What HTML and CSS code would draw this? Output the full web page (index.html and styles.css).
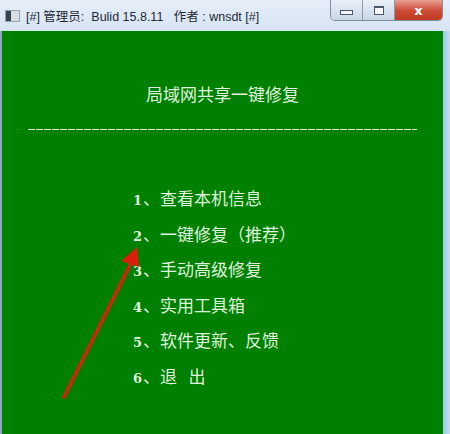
FILE: index.html
```html
<!DOCTYPE html>
<html lang="zh-CN">
<head>
    <meta charset="UTF-8">
    <title>局域网共享一键修复</title>
    <link rel="stylesheet" href="styles.css">
</head>
<body>
    <div class="window">
        <header class="titlebar">
            <div class="title">
                <span class="app-icon"><span class="app-icon-bar"></span></span>
                <span class="title-text">[#] 管理员:&nbsp; Bulid 15.8.11 &nbsp; 作者 : wnsdt [#]</span>
            </div>
            <div class="caption-buttons">
                <div class="cap cap-min"><span class="glyph-min"></span></div>
                <div class="cap cap-max"><span class="glyph-max"></span></div>
                <div class="cap cap-close">x</div>
            </div>
        </header>
        <div class="frame">
            <div class="console">
                <h1 class="heading">局域网共享一键修复</h1>
                <div class="rule"></div>
                <ul class="menu">
                    <li><b>1</b>、查看本机信息</li>
                    <li><b>2</b>、一键修复（推荐）</li>
                    <li><b>3</b>、手动高级修复</li>
                    <li><b>4</b>、实用工具箱</li>
                    <li><b>5</b>、软件更新、反馈</li>
                    <li><b>6</b>、退&nbsp;&nbsp;&nbsp;出</li>
                </ul>
                <svg class="arrow" width="100" height="170" viewBox="0 0 100 170">
                    <line x1="7" y1="150" x2="74" y2="16" stroke="#b8300c" stroke-width="4" stroke-linecap="round"/>
                    <polygon points="80,0 82,20 64,14" fill="#d8200c"/>
                </svg>
            </div>
            <div class="edge"></div>
        </div>
    </div>
</body>
</html>
```

FILE: styles.css
```css
body {
    margin: 0;
    padding: 0;
    background-color: #cfe0f1;
    font-family: "Noto Sans CJK SC", "Liberation Sans", sans-serif;
}
.window {
    width: 450px;
    height: 434px;
    display: flex;
    flex-direction: column;
    overflow: hidden;
}
.titlebar {
    height: 31px;
    display: flex;
    justify-content: space-between;
    background: linear-gradient(to bottom, #e6eef8, #d6e4f3);
}
.title {
    display: flex;
    align-items: center;
    padding: 0 0 0 5px;
    height: 31px;
    gap: 6px;
}
.app-icon {
    width: 15px;
    height: 12px;
    background-color: #d8dde4;
    border: 1px solid #9aa3ad;
    box-sizing: border-box;
    display: flex;
}
.app-icon-bar {
    width: 5px;
    background-color: #34424f;
}
.title-text {
    font-size: 12.5px;
    color: #1e2a36;
    white-space: pre;
    font-family: "Liberation Sans", "Noto Sans CJK SC", sans-serif;
}
.caption-buttons {
    display: flex;
    margin-right: 7px;
    height: 20px;
    border: 1px solid #7d8fa3;
    border-top: none;
    border-radius: 0 0 5px 5px;
    overflow: hidden;
}
.cap {
    width: 31px;
    display: flex;
    align-items: center;
    justify-content: center;
    background: linear-gradient(to bottom, #e9f0f8, #c9d6e5);
    border-right: 1px solid #8a9bb0;
}
.glyph-min {
    width: 11px;
    height: 3px;
    border: 1px solid #4a5868;
    background-color: #f4f6f9;
    margin-top: 5px;
}
.glyph-max {
    width: 8px;
    height: 6px;
    border: 1px solid #4a5868;
    border-top-width: 2px;
    background-color: #f4f6f9;
}
.cap-close {
    width: 47px;
    border-right: none;
    background: linear-gradient(to bottom, #e7a092, #cc4a33 55%, #c03a22);
    color: #ffffff;
    font-weight: bold;
    font-size: 13px;
    font-family: "DejaVu Sans", sans-serif;
    line-height: 1;
}
.frame {
    flex: 1;
    display: flex;
    padding-left: 2px;
    background-color: #8fa6bd;
}
.console {
    position: relative;
    flex: 1;
    background-color: #008000;
    color: #dff0dc;
}
.edge {
    width: 7px;
    background: linear-gradient(to right, #9fc6e6, #c6def2);
}
.heading {
    margin: 0;
    padding-top: 52px;
    text-align: center;
    font-size: 17px;
    font-weight: normal;
    line-height: 22px;
}
.rule {
    margin: 24px 26px 0 26px;
    height: 1px;
    background: repeating-linear-gradient(to right, #d9ecd6 0, #d9ecd6 7px, transparent 7px, transparent 8px);
}
.menu {
    list-style: none;
    margin: 0;
    padding: 57px 0 0 131px;
    font-size: 17px;
}
.menu li {
    height: 35.6px;
    line-height: 22px;
}
.menu b {
    font-family: "DejaVu Serif", "Liberation Serif", serif;
    font-size: 13px;
    display: inline-block;
    width: 10px;
}
.arrow {
    position: absolute;
    left: 55px;
    top: 216px;
}
```
